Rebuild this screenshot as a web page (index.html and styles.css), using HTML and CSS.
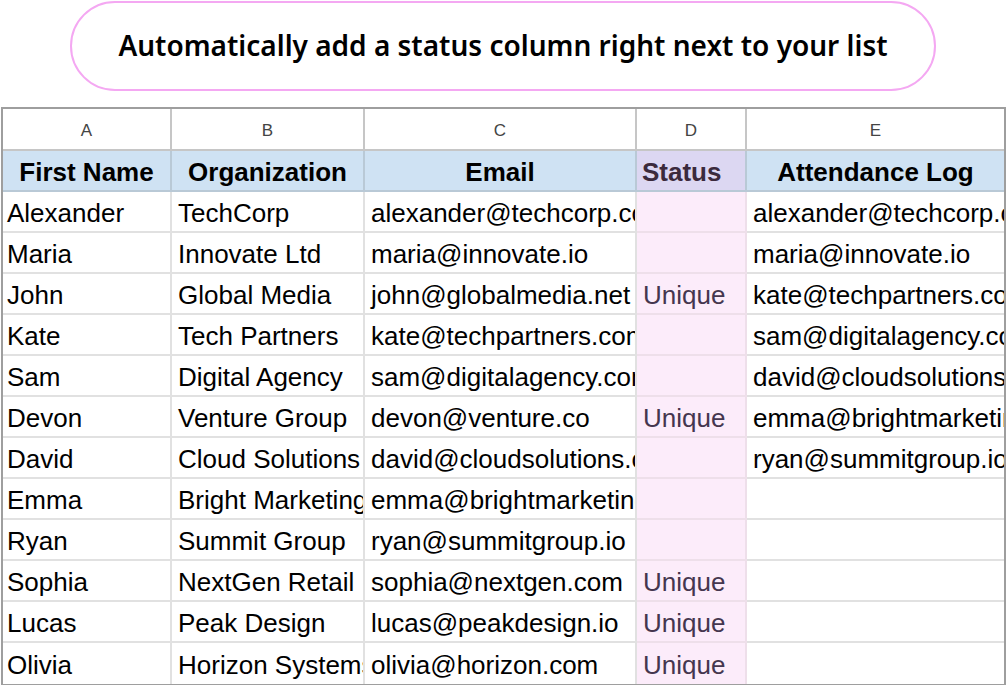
FILE: index.html
```html
<!DOCTYPE html>
<html lang="en">
<head>
    <meta charset="UTF-8">
    <meta name="viewport" content="width=device-width, initial-scale=1.0">
    <title>Status column</title>
    <link rel="stylesheet" href="styles.css">
</head>
<body>
    <div class="banner">Automatically add a status column right next to your list</div>

    <div class="sheet">
        <div class="grid">
            <div class="col-letter">A</div>
            <div class="col-letter">B</div>
            <div class="col-letter">C</div>
            <div class="col-letter">D</div>
            <div class="col-letter">E</div>

            <div class="head">First Name</div>
            <div class="head">Organization</div>
            <div class="head">Email</div>
            <div class="head status">Status</div>
            <div class="head">Attendance Log</div>

            <div class="cell">Alexander</div><div class="cell">TechCorp</div><div class="cell">alexander@techcorp.com</div><div class="cell status"></div><div class="cell">alexander@techcorp.com</div>
            <div class="cell">Maria</div><div class="cell">Innovate Ltd</div><div class="cell">maria@innovate.io</div><div class="cell status"></div><div class="cell">maria@innovate.io</div>
            <div class="cell">John</div><div class="cell">Global Media</div><div class="cell">john@globalmedia.net</div><div class="cell status">Unique</div><div class="cell">kate@techpartners.com</div>
            <div class="cell">Kate</div><div class="cell">Tech Partners</div><div class="cell">kate@techpartners.com</div><div class="cell status"></div><div class="cell">sam@digitalagency.com</div>
            <div class="cell">Sam</div><div class="cell">Digital Agency</div><div class="cell">sam@digitalagency.com</div><div class="cell status"></div><div class="cell">david@cloudsolutions.com</div>
            <div class="cell">Devon</div><div class="cell">Venture Group</div><div class="cell">devon@venture.co</div><div class="cell status">Unique</div><div class="cell">emma@brightmarketing.com</div>
            <div class="cell">David</div><div class="cell">Cloud Solutions</div><div class="cell">david@cloudsolutions.com</div><div class="cell status"></div><div class="cell">ryan@summitgroup.io</div>
            <div class="cell">Emma</div><div class="cell">Bright Marketing</div><div class="cell">emma@brightmarketing.com</div><div class="cell status"></div><div class="cell"></div>
            <div class="cell">Ryan</div><div class="cell">Summit Group</div><div class="cell">ryan@summitgroup.io</div><div class="cell status"></div><div class="cell"></div>
            <div class="cell">Sophia</div><div class="cell">NextGen Retail</div><div class="cell">sophia@nextgen.com</div><div class="cell status">Unique</div><div class="cell"></div>
            <div class="cell">Lucas</div><div class="cell">Peak Design</div><div class="cell">lucas@peakdesign.io</div><div class="cell status">Unique</div><div class="cell"></div>
            <div class="cell last">Olivia</div><div class="cell last">Horizon Systems</div><div class="cell last">olivia@horizon.com</div><div class="cell status last">Unique</div><div class="cell last"></div>
        </div>
    </div>
</body>
</html>
```

FILE: styles.css
```css
body {
    margin: 0;
    padding: 0;
    background: #ffffff;
    font-family: "Liberation Sans", Arial, sans-serif;
    color: #000000;
}
.banner {
    box-sizing: border-box;
    width: 866px;
    height: 90px;
    margin: 1px auto 0;
    border: 2px solid #f4a8f2;
    border-radius: 45px;
    display: flex;
    align-items: center;
    justify-content: center;
    font-family: "Noto Sans", "Open Sans", sans-serif;
    font-weight: 600;
    font-size: 28px;
    padding-bottom: 2px;
}
.sheet {
    margin: 16px 0 0 1px;
    width: 1005px;
    box-sizing: border-box;
    border: 2px solid #9e9e9e;
    overflow: hidden;
}
.grid {
    display: grid;
    grid-template-columns: 169px 193px 272px 110px 257px;
    grid-template-rows: 42px 41px;
    grid-auto-rows: 41px;
}
.grid > div {
    box-sizing: border-box;
    white-space: nowrap;
    overflow: hidden;
    display: flex;
    align-items: center;
    padding-top: 3px;
    border-right: 2px solid #e1e1e1;
    border-bottom: 2px solid #e1e1e1;
}
.grid > div:nth-child(5n) {
    border-right: none;
}
.col-letter {
    justify-content: center;
    font-size: 17px;
    color: #444444;
    border-color: #c6c6c6 !important;
}
.head {
    justify-content: center;
    background: #cfe2f3;
    font-weight: bold;
    font-size: 26px;
    border-color: #b9c9d6 !important;
}
.head.status {
    justify-content: flex-start;
    padding-left: 5px;
    background: #dcd7f2;
    color: #3b2a3c;
}
.cell {
    font-size: 26px;
    padding-left: 6px;
}
.grid > .cell:nth-child(5n+1) {
    padding-left: 4px;
}
.cell.status {
    background: #fcecfa;
    color: #45364f;
    border-bottom-color: #eedfea;
    border-right-color: #eedfea;
}
.cell.last {
    border-bottom: none;
}
```
